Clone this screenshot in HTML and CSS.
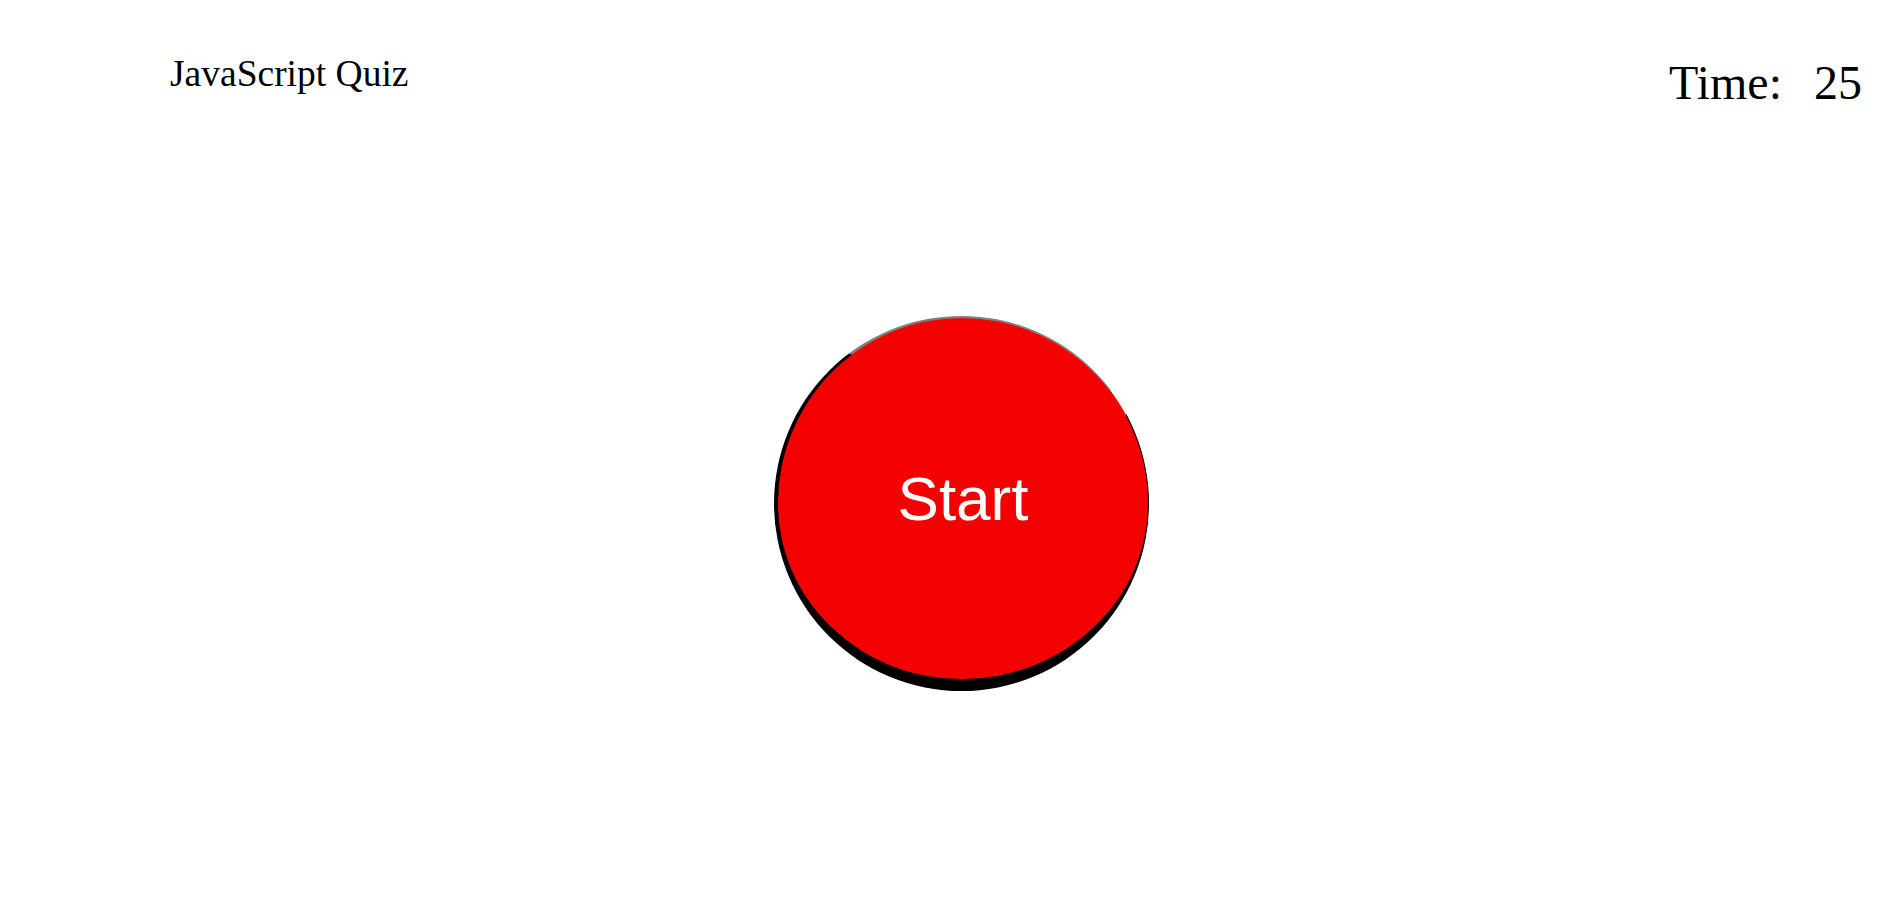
FILE: index.html
```html
<!DOCTYPE html>
<html lang="en">
<head>
<meta charset="utf-8">
<title>JavaScript Quiz</title>
<link rel="stylesheet" href="styles.css">
</head>
<body>
  <header class="top-bar">
    <div class="title">JavaScript Quiz</div>
    <div class="timer"><span class="timer-label">Time:</span><span class="timer-value">25</span></div>
  </header>
  <main class="stage">
    <button class="start-btn" type="button">Start</button>
  </main>
</body>
</html>
```
FILE: styles.css
```css
html, body {
  margin: 0;
  padding: 0;
  background: #ffffff;
}

body {
  font-family: "Liberation Serif", "Times New Roman", serif;
  color: #000;
}

.top-bar {
  display: flex;
  justify-content: space-between;
  align-items: flex-start;
  padding: 52px 36px 0 170px;
}

.title {
  font-size: 37.5px;
  line-height: normal;
}

.timer {
  font-size: 48px;
  line-height: normal;
  margin-top: 3px;
  display: flex;
}

.timer-value {
  margin-left: 32px;
}

.stage {
  display: flex;
  justify-content: center;
  padding-top: 206px;
  padding-left: 25px;
}

.start-btn {
  box-sizing: border-box;
  width: 375px;
  height: 375px;
  border-radius: 50%;
  background: #f40000;
  color: #ffffff;
  font-family: "Liberation Sans", Arial, sans-serif;
  font-size: 62px;
  border-style: solid;
  border-color: #7f7f7f #000000 #000000 #000000;
  border-width: 2px 1px 12px 4px;
  padding: 0;
  margin: 0;
  cursor: pointer;
}
```
